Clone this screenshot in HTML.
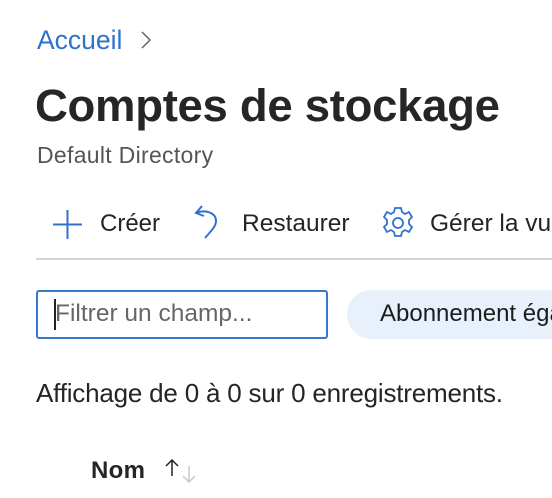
<!DOCTYPE html>
<html><head><meta charset="utf-8"><style>
*{margin:0;padding:0;box-sizing:border-box}
html,body{width:552px;height:498px;overflow:hidden;background:#fff;font-family:"Liberation Sans",sans-serif;color:#252525}
#w{position:relative;width:552px;height:498px;overflow:hidden}
.a{position:absolute;white-space:nowrap}
</style></head><body><div id="w">
<div class="a" style="left:37px;top:25px;font-size:26.5px;color:#2f72cc">Accueil</div>
<svg class="a" style="left:139px;top:30px" width="14" height="20" viewBox="0 0 14 20"><path d="M3 2l8 8-8 8" fill="none" stroke="#666" stroke-width="1.5"/></svg>
<div class="a" style="left:35px;top:80px;font-size:45.5px;font-weight:bold;letter-spacing:-0.3px;color:#262626">Comptes de stockage</div>
<div class="a" style="left:37px;top:142px;font-size:23px;color:#555;letter-spacing:0.3px">Default Directory</div>
<svg class="a" style="left:52px;top:209px" width="31" height="31" viewBox="0 0 31 31"><path d="M15.5 1v29M1 15.5h29" stroke="#2f72cc" stroke-width="2"/></svg>
<div class="a" style="left:100px;top:210px;font-size:24px">Créer</div>
<svg class="a" style="left:192px;top:204px" width="28" height="40" viewBox="0 0 28 40"><path d="M10 2L4 9l8 3" fill="none" stroke="#2f72cc" stroke-width="2"/><path d="M4 9c10-4 20 0 20 8 0 5-4 9-11 17" fill="none" stroke="#2f72cc" stroke-width="2"/></svg>
<div class="a" style="left:242px;top:210px;font-size:24.5px">Restaurer</div>
<svg class="a" style="left:381px;top:206px" width="34" height="34" viewBox="0 0 34 34"><g fill="none" stroke="#2f72cc" stroke-width="1.8"><circle cx="17" cy="17" r="5"/><path d="M14 2h6l1 4 3 2 4-2 3 5-3 3v4l3 3-3 5-4-2-3 2-1 4h-6l-1-4-3-2-4 2-3-5 3-3v-4l-3-3 3-5 4 2 3-2z"/></g></svg>
<div class="a" style="left:430px;top:210px;font-size:24.5px">Gérer la vue</div>
<div class="a" style="left:36px;top:258px;width:516px;height:2px;background:#d4d4d4"></div>
<div class="a" style="left:36px;top:290px;width:292px;height:49px;border:2.5px solid #3877cc;border-radius:3px"></div>
<div class="a" style="left:54px;top:299px;width:2px;height:31px;background:#222"></div>
<div class="a" style="left:55px;top:300px;font-size:24.5px;color:#666">Filtrer un champ...</div>
<div class="a" style="left:347px;top:290px;width:205px;height:49px;background:#e8f1fb;border-radius:25px 0 0 25px;overflow:hidden"><div class="a" style="left:33px;top:10px;font-size:24px;color:#1c1c1c">Abonnement égal à tous</div></div>
<div class="a" style="left:36px;top:378px;font-size:26px;letter-spacing:-0.2px">Affichage de 0 à 0 sur 0 enregistrements.</div>
<div class="a" style="left:91px;top:457px;font-size:24px;font-weight:bold;letter-spacing:0.3px">Nom</div>
<svg class="a" style="left:163px;top:458px" width="36" height="28" viewBox="0 0 36 28"><path d="M9 2v16M3 8l6-6 6 6" fill="none" stroke="#222" stroke-width="1.5"/><path d="M26 8v16M20 18l6 6 6-6" fill="none" stroke="#c8c8c8" stroke-width="1.5"/></svg>
</div></body></html>
